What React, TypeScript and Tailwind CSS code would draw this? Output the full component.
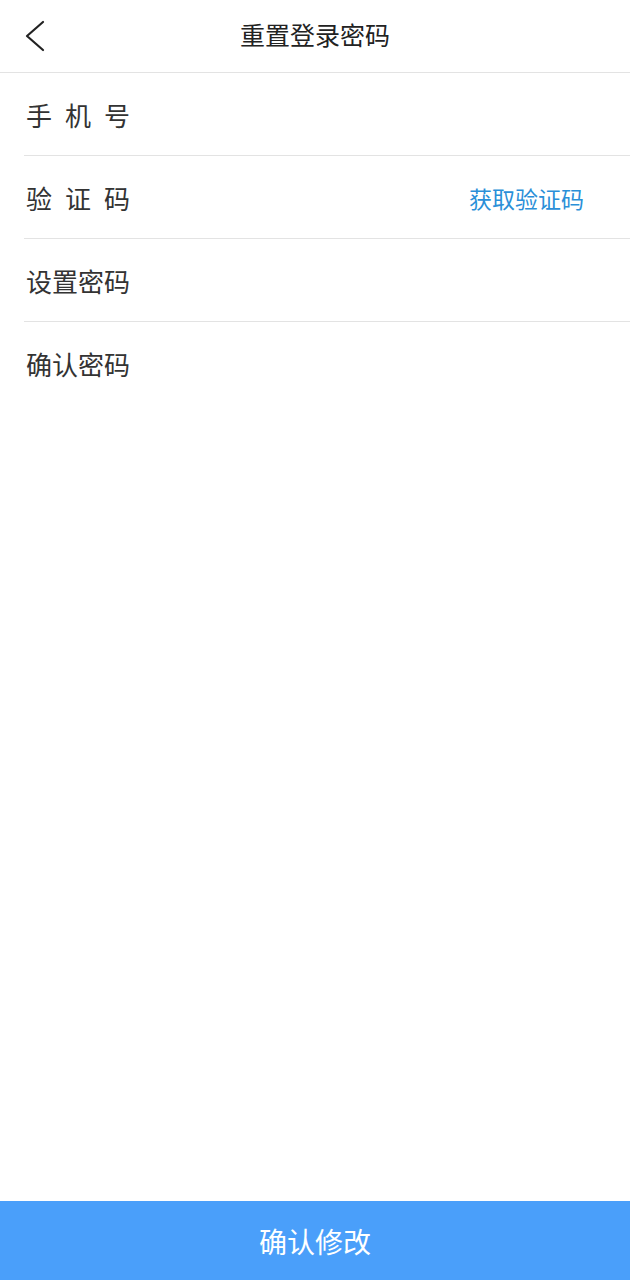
const font = {
    fontFamily: '"Noto Sans CJK SC", "Noto Sans", sans-serif',
};

function Row({
    label,
    spaced,
    action,
    border = true,
}: {
    label: string;
    spaced?: boolean;
    action?: string;
    border?: boolean;
}) {
    return (
        <div
            className={`ml-6 flex h-[83px] items-center justify-between pr-[46px] ${
                border ? 'border-b border-[#e3e3e3]' : ''
            }`}
        >
            <span
                className={`pt-[1px] pl-[2px] text-[26px] leading-none text-[#333333] ${
                    spaced ? 'tracking-[13px]' : ''
                }`}
            >
                {label}
            </span>
            {action && (
                <button className="pt-[2px] text-[23px] leading-none text-[#2a8fd8]">
                    {action}
                </button>
            )}
        </div>
    );
}

export default function App() {
    return (
        <div
            className="flex h-[1280px] w-[630px] flex-col bg-white"
            style={font}
        >
            {/* header */}
            <div className="relative flex h-[73px] items-center justify-center border-b border-[#e3e3e3]">
                <button className="absolute left-[24px] top-[20px]">
                    <svg width="22" height="32" viewBox="0 0 22 32" fill="none">
                        <polyline
                            points="19,2 3,16 19,30"
                            stroke="#222"
                            strokeWidth="2.2"
                            strokeLinecap="round"
                            strokeLinejoin="round"
                        />
                    </svg>
                </button>
                <h1 className="pb-[3px] text-[25px] leading-none text-[#222222]">
                    重置登录密码
                </h1>
            </div>

            <Row label="手机号" spaced />
            <Row label="验证码" spaced action="获取验证码" />
            <Row label="设置密码" />
            <Row label="确认密码" border={false} />

            <div className="flex-1" />

            <button className="flex h-[79px] items-center justify-center bg-[#4a9ffa] text-[28px] leading-none text-white">
                <span>确认修改</span>
            </button>
        </div>
    );
}
